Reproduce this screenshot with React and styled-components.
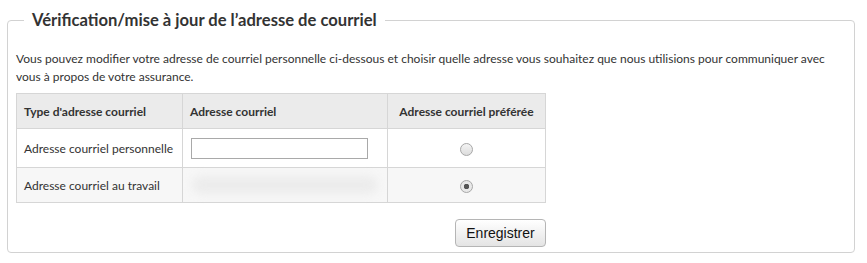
import styled, { createGlobalStyle } from "styled-components";

const GlobalStyle = createGlobalStyle`
  body {
    margin: 0;
    background: #fff;
    font-family: Lato, "Open Sans", sans-serif;
    color: #333;
  }
`;

const rows = [
  { type: "Adresse courriel personnelle", editable: true, preferred: false },
  { type: "Adresse courriel au travail", editable: false, preferred: true },
];

const App = () => {
  return (
    <Page>
      <GlobalStyle />
      <Fieldset>
        <Legend>Vérification/mise à jour de l’adresse de courriel</Legend>
        <Intro>
          Vous pouvez modifier votre adresse de courriel personnelle ci-dessous et choisir quelle adresse vous
          souhaitez que nous utilisions pour communiquer avec vous à propos de votre assurance.
        </Intro>
        <Bottom>
          <Table>
            <thead>
              <tr>
                <Th>Type d'adresse courriel</Th>
                <Th>Adresse courriel</Th>
                <Th $center>Adresse courriel préférée</Th>
              </tr>
            </thead>
            <tbody>
              {rows.map((row, i) => (
                <Tr key={row.type} $alt={i % 2 === 1} $tall={i === 0}>
                  <Td>{row.type}</Td>
                  <Td>{row.editable ? <TextInput type="text" /> : <Blurred />}</Td>
                  <Td $center>
                    <Radio $checked={row.preferred} />
                  </Td>
                </Tr>
              ))}
            </tbody>
          </Table>
          <Actions>
            <Button>Enregistrer</Button>
          </Actions>
        </Bottom>
      </Fieldset>
    </Page>
  );
};

const Page = styled.div`
  padding: 10px 12px 9px 7px;
`;

const Fieldset = styled.fieldset`
  margin: 0;
  border: 1px solid #d2d2d2;
  border-radius: 4px;
  padding: 20px 8px 5px 8px;
  min-width: 0;
`;

const Legend = styled.legend`
  margin-left: 8px;
  padding: 0 8px;
  font-size: 16.6px;
  font-weight: 700;
  color: #333;
`;

const Intro = styled.p`
  margin: 0 0 7px 0;
  font-size: 12px;
  line-height: 18px;
  color: #333;
`;

const Bottom = styled.div`
  display: inline-flex;
  flex-direction: column;
  align-items: stretch;
`;

const Table = styled.table`
  border-collapse: collapse;
  table-layout: fixed;
  width: 530px;
  font-size: 12px;
`;

const Th = styled.th`
  box-sizing: border-box;
  background: #ebebeb;
  border: 1px solid #d6d6d6;
  height: 35px;
  padding: 0 7px;
  text-align: ${(p) => (p.$center ? "center" : "left")};
  font-weight: 700;
  color: #333;
  &:nth-child(1) { width: 166px; }
  &:nth-child(2) { width: 205px; }
`;

const Tr = styled.tr`
  background: ${(p) => (p.$alt ? "#f7f7f7" : "#fff")};
  height: ${(p) => (p.$tall ? "39px" : "35px")};
`;

const Td = styled.td`
  border: 1px solid #d6d6d6;
  padding: 0 7px;
  white-space: nowrap;
  text-align: ${(p) => (p.$center ? "center" : "left")};
  vertical-align: middle;
`;

const TextInput = styled.input`
  display: block;
  box-sizing: border-box;
  width: 177px;
  height: 21px;
  margin-left: 1px;
  border: 1px solid #a9a9a9;
  background: #fff;
  outline: none;
`;

const Blurred = styled.span`
  display: block;
  width: 186px;
  height: 18px;
  margin-left: 2px;
  border-radius: 9px;
  background: #ececec;
  filter: blur(4px);
`;

const Radio = styled.span`
  display: inline-block;
  vertical-align: middle;
  width: 11px;
  height: 11px;
  border-radius: 50%;
  border: 1px solid #a8a8a8;
  background: ${(p) =>
    p.$checked
      ? "radial-gradient(circle, #555 0 2.5px, #e8e8e8 3px)"
      : "linear-gradient(#f4f4f4, #dcdcdc)"};
`;

const Actions = styled.div`
  display: flex;
  justify-content: flex-end;
  margin-top: 16px;
`;

const Button = styled.button`
  font-family: "Liberation Sans", Arial, sans-serif;
  font-size: 14px;
  color: #111;
  height: 28px;
  width: 91px;
  padding: 0;
  border: 1px solid #b5b5b5;
  border-radius: 4px;
  background: linear-gradient(#ffffff, #e4e4e4);
  cursor: pointer;
`;

export default App;
